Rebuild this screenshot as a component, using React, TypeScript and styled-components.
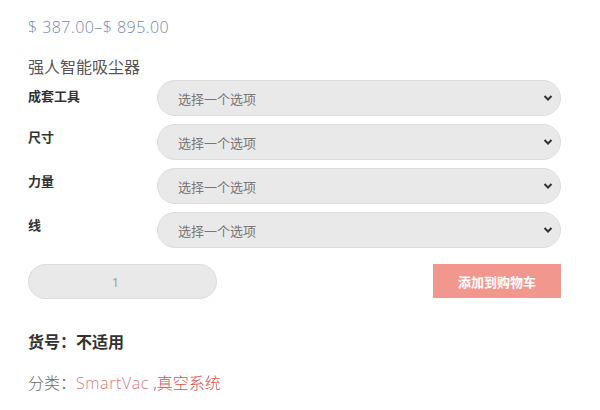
import React from "react";
import styled, { createGlobalStyle } from "styled-components";

const GlobalStyle = createGlobalStyle`
  body {
    margin: 0;
    background: #fff;
    font-family: "Noto Sans", "Noto Sans CJK SC", sans-serif;
  }
`;

const Page = styled.div`
  padding: 14px 39px 0 28px;
  width: 600px;
  box-sizing: border-box;
`;

const Price = styled.div`
  font-family: "Open Sans", "Noto Sans CJK SC", sans-serif;
  font-size: 16px;
  font-weight: 300;
  line-height: 26px;
  color: #7587a8;
  letter-spacing: 0.45px;
`;

const Title = styled.div`
  margin-top: 13px;
  font-family: "Noto Sans CJK SC", sans-serif;
  font-size: 16px;
  line-height: 26px;
  color: #555;
`;

const Variations = styled.div`
  margin-top: 1px;
  display: flex;
  flex-direction: column;
  gap: 8px;
`;

const Row = styled.div`
  display: flex;
  align-items: flex-start;
`;

interface ILabelProps {
  first?: boolean;
}

const Label = styled("label")<ILabelProps>`
  width: 129px;
  flex-shrink: 0;
  padding-top: ${props => (props.first ? "3px" : "0")};
  font-family: "Noto Sans CJK SC", sans-serif;
  font-size: 13px;
  font-weight: 700;
  line-height: 26px;
  color: #333;
`;

const SelectWrap = styled.div`
  position: relative;
  flex: 1;
`;

const Select = styled.select`
  appearance: none;
  width: 100%;
  height: 36px;
  box-sizing: border-box;
  padding: 0 40px 0 20px;
  border: 1px solid #dcdcdc;
  border-radius: 18px;
  background: #e9e9e9;
  font-family: "Noto Sans CJK SC", sans-serif;
  font-size: 13px;
  color: #777;
  outline: none;
`;

const Chevron = styled.svg`
  position: absolute;
  right: 8px;
  top: 50%;
  transform: translateY(-50%);
  width: 10px;
  height: 10px;
  pointer-events: none;
`;

const CartRow = styled.div`
  display: flex;
  justify-content: space-between;
  align-items: flex-start;
  margin-top: 16px;
`;

const Qty = styled.input`
  width: 189px;
  height: 35px;
  box-sizing: border-box;
  padding: 0 14px 0 0;
  border: 1px solid #dcdcdc;
  border-radius: 18px;
  background: #e9e9e9;
  text-align: center;
  font-family: "Open Sans", sans-serif;
  font-size: 13px;
  color: #9a9a9a;
  outline: none;
`;

const AddButton = styled.button`
  width: 128px;
  height: 34px;
  border: none;
  background: #f2978e;
  color: #fff;
  font-family: "Noto Sans CJK SC", sans-serif;
  font-size: 13px;
  font-weight: 700;
  cursor: pointer;
`;

const Sku = styled.div`
  margin-top: 30px;
  font-family: "Noto Sans CJK SC", sans-serif;
  font-size: 16px;
  font-weight: 700;
  line-height: 24px;
  color: #333;
`;

const Meta = styled.div`
  margin-top: 18px;
  font-family: "Open Sans", "Noto Sans CJK SC", sans-serif;
  font-size: 16px;
  font-weight: 300;
  line-height: 24px;
  color: #666;
`;

interface ILinkProps {
  light?: boolean;
}

const Link = styled("a")<ILinkProps>`
  color: ${props => (props.light ? "#d9797e" : "#d9534f")};
  letter-spacing: ${props => (props.light ? "0.6px" : "0")};
  text-decoration: none;
`;

const attributes = ["成套工具", "尺寸", "力量", "线"];

export default function App() {
  return (
    <Page>
      <GlobalStyle />
      <Price>$ 387.00–$ 895.00</Price>
      <Title>强人智能吸尘器</Title>
      <Variations>
        {attributes.map((name, index) => (
          <Row key={name}>
            <Label first={index === 0}>{name}</Label>
            <SelectWrap>
              <Select defaultValue="">
                <option value="">选择一个选项</option>
              </Select>
              <Chevron viewBox="0 0 10 10">
                <path
                  d="M1.5 3 L5 6.5 L8.5 3"
                  fill="none"
                  stroke="#333"
                  strokeWidth="2"
                />
              </Chevron>
            </SelectWrap>
          </Row>
        ))}
      </Variations>
      <CartRow>
        <Qty type="text" defaultValue="1" />
        <AddButton>添加到购物车</AddButton>
      </CartRow>
      <Sku>货号：不适用</Sku>
      <Meta>
        分类：<Link light href="#">SmartVac</Link> ,<Link href="#">真空系统</Link>
      </Meta>
    </Page>
  );
}
